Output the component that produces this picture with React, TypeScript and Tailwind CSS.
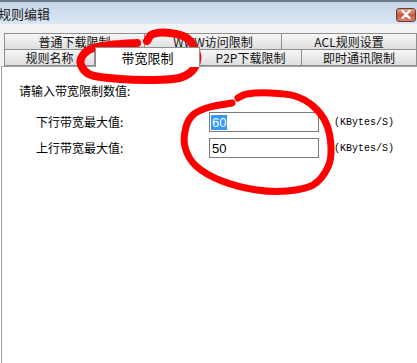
import React from "react"

const row1 = [
  { label: "普通下载限制", w: "w-[141px]" },
  { label: "WWW访问限制", w: "w-[138px]" },
  { label: "ACL规则设置", w: "flex-1" },
]

const row2 = [
  { label: "规则名称", w: "w-[91px]", active: false },
  { label: "带宽限制", w: "w-[105px]", active: true },
  { label: "P2P下载限制", w: "w-[103px]", active: false },
  { label: "即时通讯限制", w: "flex-1", active: false },
]

// smooth path through points (catmull-rom -> cubic bezier)
function smooth(pts: number[][]) {
  let d = `M${pts[0][0]},${pts[0][1]}`
  for (let i = 0; i < pts.length - 1; i++) {
    const p0 = pts[i - 1] || pts[i]
    const p1 = pts[i]
    const p2 = pts[i + 1]
    const p3 = pts[i + 2] || p2
    const c1x = p1[0] + (p2[0] - p0[0]) / 6
    const c1y = p1[1] + (p2[1] - p0[1]) / 6
    const c2x = p2[0] - (p3[0] - p1[0]) / 6
    const c2y = p2[1] - (p3[1] - p1[1]) / 6
    d += ` C${c1x},${c1y} ${c2x},${c2y} ${p2[0]},${p2[1]}`
  }
  return d
}

const loop1 = [
  [147, 41], [153, 34], [170, 33], [187, 38], [196, 51], [197, 61], [192, 71],
  [179, 78], [153, 80], [120, 79], [91, 75], [81, 65], [83, 55], [93, 48],
  [110, 45], [137, 43],
]

const loop2 = [
  [238, 98], [247, 94], [270, 93], [295, 96], [313, 106], [326, 123], [331, 147],
  [328, 167], [313, 185], [287, 191], [257, 190], [222, 181], [196, 166],
  [185, 147], [186, 127], [194, 114], [210, 107], [232, 103],
]

function Tab({ label, w, active }: { label: string; w: string; active?: boolean }) {
  if (active) {
    return (
      <div
        className={`${w} relative z-10 -mt-[2px] -mb-[1px] h-[20px] flex items-center justify-center bg-white border-l border-t border-r border-[#8f8f8f] text-[13px] text-black`}
      >
        {label}
      </div>
    )
  }
  return (
    <div
      className={`${w} h-[17px] flex items-center justify-center bg-gradient-to-b from-[#f7f7f7] to-[#dedede] border border-[#8f8f8f] -ml-px first:ml-0 text-[12px] text-[#111]`}
    >
      {label}
    </div>
  )
}

export default function App() {
  return (
    <div
      className="relative w-[417px] h-[363px] overflow-hidden bg-white flex flex-col"
      style={{ fontFamily: "'Noto Sans CJK SC', 'Liberation Sans', sans-serif" }}
    >
      {/* title bar */}
      <div className="h-[24px] shrink-0 flex items-center justify-between border-t-2 border-[#6d7c8c] bg-gradient-to-b from-[#c4d5ea] to-[#dce7f3]">
        <span className="-ml-[2px] text-[13px] text-[#1b1b1b] leading-none">规则编辑</span>
        <div className="mr-[1px] mt-[3px] w-[20px] h-[14px] rounded-[3px] border border-[#6b3a32] bg-gradient-to-b from-[#e3a48e] via-[#c9543f] to-[#d8826a] flex items-center justify-center">
          <svg width="10" height="9" viewBox="0 0 10 9">
            <path d="M1.5 1 L8.5 8 M8.5 1 L1.5 8" stroke="#fff" strokeWidth="2.4" strokeLinecap="round" />
          </svg>
        </div>
      </div>

      {/* tabs */}
      <div className="shrink-0 bg-[#f3f3f3] pt-[9px] pl-[4px]">
        <div className="flex">
          {row1.map((t) => (
            <Tab key={t.label} label={t.label} w={t.w} />
          ))}
        </div>
        <div className="flex items-end -mt-px">
          {row2.map((t) => (
            <Tab key={t.label} label={t.label} w={t.w} active={t.active} />
          ))}
        </div>
      </div>

      {/* panel */}
      <div className="flex-1 ml-[1px] bg-white border-l border-t border-[#a0a0a0] pt-[16px] pl-[17px] text-[12px] text-black">
        <div className="leading-[16px]">请输入带宽限制数值:</div>
        <div className="mt-[13px] ml-[17px] flex flex-col gap-[6px]">
          {[
            { label: "下行带宽最大值:", value: "60", sel: true },
            { label: "上行带宽最大值:", value: "50", sel: false },
          ].map((r) => (
            <div key={r.label} className="flex items-center h-[20px]">
              <div className="w-[173px] text-[12px]">{r.label}</div>
              <div className="w-[110px] h-[20px] border border-[#7a7a7a] bg-white flex items-center pl-[1px]">
                <span
                  className={`text-[13px] leading-[15px] px-[1px] ${r.sel ? "bg-[#3399ff] text-white" : "text-black"}`}
                  style={{ fontFamily: "'Liberation Sans', sans-serif" }}
                >
                  {r.value}
                </span>
              </div>
              <div
                className="ml-[15px] text-[10px] text-black"
                style={{ fontFamily: "'Liberation Mono', monospace" }}
              >
                (KBytes/S)
              </div>
            </div>
          ))}
        </div>
      </div>

      {/* hand-drawn red marks */}
      <svg className="absolute inset-0 pointer-events-none" width="417" height="363">
        <path d={smooth(loop1)} fill="none" stroke="#ff0000" strokeWidth="8" strokeLinecap="round" strokeLinejoin="round" />
        <path d={smooth(loop2)} fill="none" stroke="#ff0000" strokeWidth="7" strokeLinecap="round" strokeLinejoin="round" />
      </svg>
    </div>
  )
}
